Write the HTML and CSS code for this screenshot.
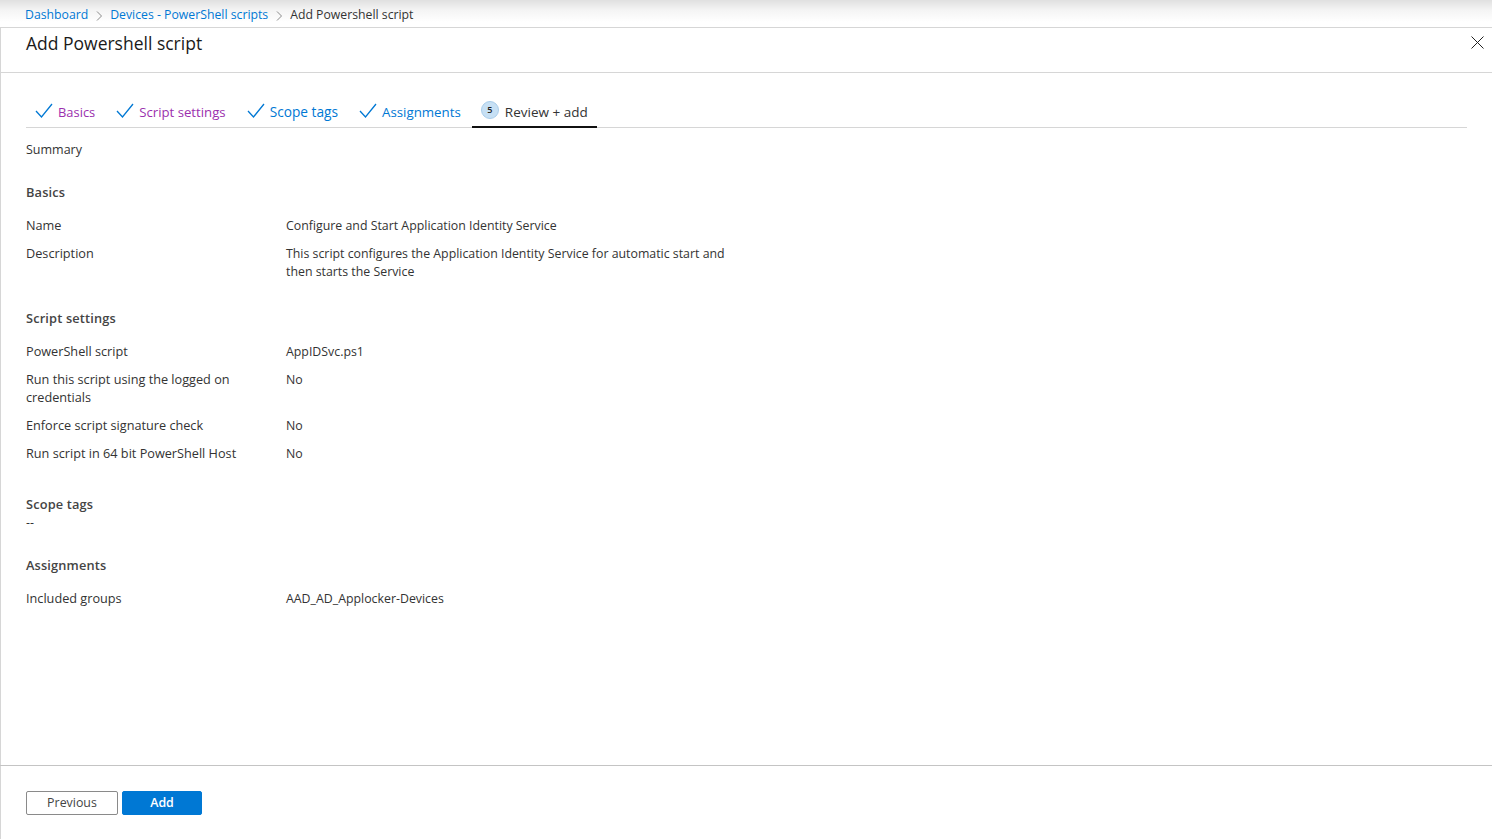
FILE: index.html
```html
<!DOCTYPE html>
<html lang="en">
<head>
<meta charset="utf-8">
<title>Add Powershell script</title>
<link rel="stylesheet" href="styles.css">
</head>
<body>
<nav class="crumbs">
  <a class="link">Dashboard</a>
  <svg class="chev" width="7" height="10" viewBox="0 0 7 10"><path d="M1 .5 5.5 5 1 9.500" fill="none" stroke="#8a8a8a"/></svg>
  <a class="link">Devices - PowerShell scripts</a>
  <svg class="chev" width="7" height="10" viewBox="0 0 7 10"><path d="M1 .5 5.5 5 1 9.500" fill="none" stroke="#8a8a8a"/></svg>
  <span>Add Powershell script</span>
</nav>
<main class="panel">
  <header class="head">
    <h1>Add Powershell script</h1>
    <svg class="close" width="13" height="13" viewBox="0 0 13 13"><path d="M.5.500 12.500 12.500M12.500.500.5 12.500" stroke="#222" fill="none"/></svg>
  </header>
  <div class="tabs">
    <div class="tab visited basics"><svg width="18" height="15" viewBox="0 0 18 15"><path d="M1 8 6.500 14 17 1" fill="none" stroke="#0078d4" stroke-width="1.300"/></svg><span>Basics</span></div>
    <div class="tab visited settings"><svg width="18" height="15" viewBox="0 0 18 15"><path d="M1 8 6.500 14 17 1" fill="none" stroke="#0078d4" stroke-width="1.300"/></svg><span>Script settings</span></div>
    <div class="tab scope"><svg width="18" height="15" viewBox="0 0 18 15"><path d="M1 8 6.500 14 17 1" fill="none" stroke="#0078d4" stroke-width="1.300"/></svg><span>Scope tags</span></div>
    <div class="tab"><svg width="18" height="15" viewBox="0 0 18 15"><path d="M1 8 6.500 14 17 1" fill="none" stroke="#0078d4" stroke-width="1.300"/></svg><span>Assignments</span></div>
    <div class="tab current"><span class="num">5</span><span>Review + add</span></div>
  </div>
  <div class="content">
    <div class="summary">Summary</div>
    <section class="sec first">
      <h2>Basics</h2>
      <div class="row"><div class="label">Name</div><div>Configure and Start Application Identity Service</div></div>
      <div class="row"><div class="label">Description</div><div>This script configures the Application Identity Service for automatic start and then starts the Service</div></div>
    </section>
    <section class="sec second">
      <h2>Script settings</h2>
      <div class="row"><div class="label">PowerShell script</div><div>AppIDSvc.ps1</div></div>
      <div class="row"><div class="label">Run this script using the logged on credentials</div><div>No</div></div>
      <div class="row"><div class="label">Enforce script signature check</div><div>No</div></div>
      <div class="row"><div class="label">Run script in 64 bit PowerShell Host</div><div>No</div></div>
    </section>
    <section class="sec third">
      <h2 class="tight">Scope tags</h2>
      <div class="dash">--</div>
    </section>
    <section class="sec fourth">
      <h2>Assignments</h2>
      <div class="row"><div class="label">Included groups</div><div>AAD_AD_Applocker-Devices</div></div>
    </section>
  </div>
  <footer class="foot">
    <button class="btn prev">Previous</button>
    <button class="btn add">Add</button>
  </footer>
</main>
</body>
</html>
```
FILE: styles.css
```css
* { box-sizing: border-box; }
html, body { margin: 0; height: 100%; }
body {
  width: 1492px;
  height: 839px;
  overflow: hidden;
  display: flex;
  flex-direction: column;
  font-family: "Open Sans", "Noto Sans", sans-serif;
  font-size: 12.35px;
  line-height: 18px;
  color: #333;
  background: #fff;
}
.crumbs {
  height: 28px;
  flex: none;
  padding: 6px 0 0 25px;
  display: flex;
  align-items: flex-start;
  background: linear-gradient(#e0e0e0 0, #f4f4f4 10px, #fff 22px);
  border-bottom: 1px solid #d6d6d6;
  color: #333;
  font-size: 12.25px;
}
.link { color: #0078d4; }
.chev { margin: 5px 7.5px 0 7.5px; }
.panel {
  flex: 1;
  display: flex;
  flex-direction: column;
  border-left: 1px solid #d6d6d6;
}
.head {
  height: 45px;
  flex: none;
  padding: 4px 8px 0 25px;
  display: flex;
  justify-content: space-between;
  border-bottom: 1px solid #d6d6d6;
}
h1 {
  margin: 0;
  font-size: 17.5px;
  line-height: 22px;
  font-weight: 400;
  color: #1a1a1a;
}
.close { margin-top: 4px; }
.tabs {
  margin: 0 25px 0 25px;
  height: 55px;
  flex: none;
  display: flex;
  align-items: flex-end;
  border-bottom: 1px solid #d6d6d6;
}
.tab {
  height: 25px;
  display: flex;
  align-items: flex-start;
  padding: 0 9px;
  margin-right: 3px;
  gap: 5px;
  font-size: 13.3px;
  color: #0078d4;
}
.tab svg { margin-top: 1px; }
.tab span { margin-top: 1px; }
.visited { color: #9b2fae; }
.basics { font-size: 12.9px; }
.settings { font-size: 13.2px; }
.scope { font-size: 13.7px; }
.current {
  color: #333;
  gap: 6px;
  margin: 0 0 -1px -1px;
  height: 26px;
  border-bottom: 2px solid #111;
  font-size: 13.5px;
}
.num {
  width: 18px;
  height: 18px;
  border-radius: 50%;
  background: #c7e0f4;
  border: 1px solid #a9cdea;
  color: #222;
  font-size: 9px;
  line-height: 16px;
  text-align: center;
  font-weight: 600;
}
.tab .num { margin-top: -1px; }
.content { flex: 1; padding: 13px 0 0 25px; }
.summary { height: 18px; font-size: 12.5px; }
.sec h2 {
  margin: 0 0 16px;
  font-size: 12.8px;
  line-height: 18px;
  font-weight: 600;
  letter-spacing: .15px;
  color: #444;
}
.sec h2.tight { margin-bottom: 1px; }
.first { margin-top: 24px; }
.second { margin-top: 18px; }
.third { margin-top: 22px; }
.fourth { margin-top: 24px; }
.row {
  display: grid;
  grid-template-columns: 218px 450px;
  column-gap: 42px;
  padding-bottom: 10px;
}
.label { font-size: 12.7px; margin: -1px 0 1px; }
.foot {
  height: 74px;
  flex: none;
  margin-left: -1px;
  padding: 25px 0 0 26px;
  display: flex;
  align-items: flex-start;
  gap: 4px;
  border-top: 1px solid #c4c4c4;
}
.btn {
  height: 24px;
  padding: 0;
  border-radius: 2px;
  font-family: inherit;
  font-size: 12.4px;
  line-height: 18px;
}
.prev { width: 92px; background: #fff; border: 1px solid #8a8a8a; color: #444; }
.add { width: 80px; background: #0078d4; border: 1px solid #0078d4; color: #fff; font-weight: 600; }
```
